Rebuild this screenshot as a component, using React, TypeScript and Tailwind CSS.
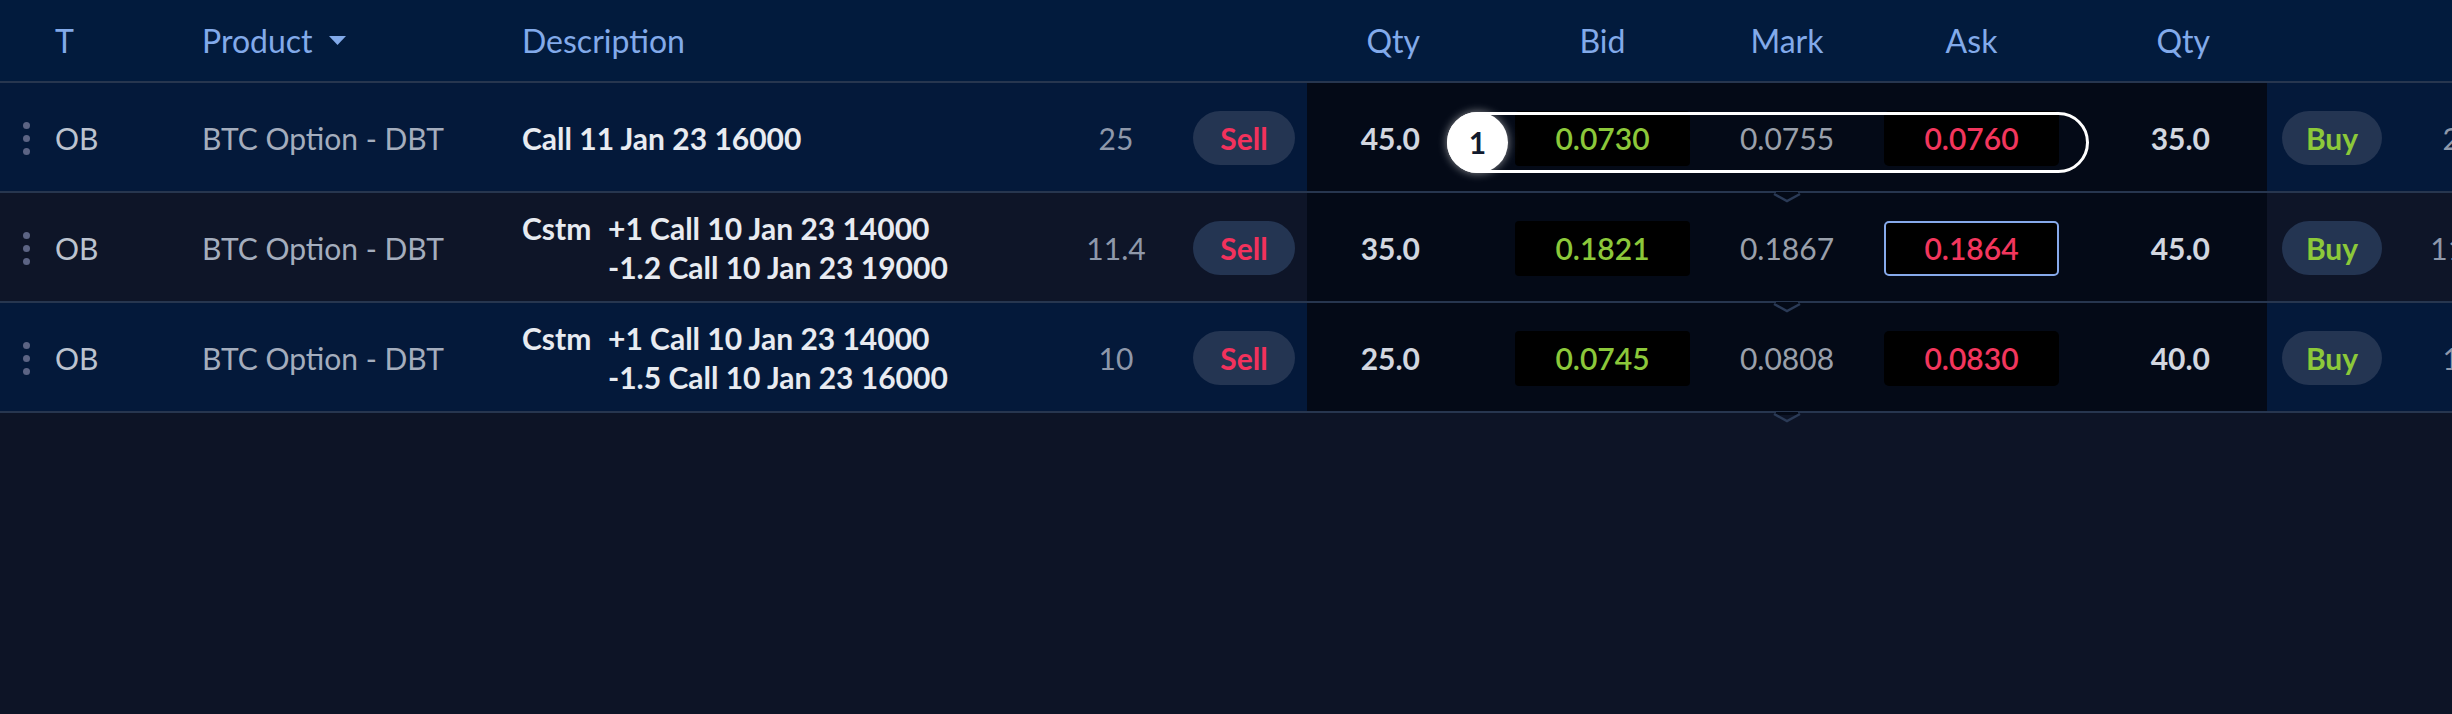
import React from "react";

type Row = {
  lines: string[];
  cstm: boolean;
  size: string;
  qtyL: string;
  bid: string;
  mark: string;
  ask: string;
  qtyR: string;
  sizeR: string;
  even: boolean;
  outline?: boolean;
  askSel?: boolean;
};

const rows: Row[] = [
  { lines: ["Call 11 Jan 23 16000"], cstm: false, size: "25", qtyL: "45.0", bid: "0.0730", mark: "0.0755", ask: "0.0760", qtyR: "35.0", sizeR: "25", even: false, outline: true },
  { lines: ["+1 Call 10 Jan 23 14000", "-1.2 Call 10 Jan 23 19000"], cstm: true, size: "11.4", qtyL: "35.0", bid: "0.1821", mark: "0.1867", ask: "0.1864", qtyR: "45.0", sizeR: "11.4", even: true, askSel: true },
  { lines: ["+1 Call 10 Jan 23 14000", "-1.5 Call 10 Jan 23 16000"], cstm: true, size: "10", qtyL: "25.0", bid: "0.0745", mark: "0.0808", ask: "0.0830", qtyR: "40.0", sizeR: "10", even: false },
];

function Handle() {
  return (
    <div className="flex flex-col items-center gap-[6px]">
      <span className="block w-[7px] h-[7px] rounded-full bg-[#5c6484]" />
      <span className="block w-[7px] h-[7px] rounded-full bg-[#5c6484]" />
      <span className="block w-[7px] h-[7px] rounded-full bg-[#5c6484]" />
    </div>
  );
}

function Notch() {
  return (
    <svg className="absolute left-1/2 -translate-x-1/2 top-[106px] z-10" width="28" height="12" viewBox="0 0 28 12">
      <rect x="3" y="1" width="22" height="3" fill="#040a17" />
      <polyline points="1,3 14,10 27,3" fill="none" stroke="#2a3a56" strokeWidth="2.5" />
    </svg>
  );
}

function DataRow({ r }: { r: Row }) {
  const bg = r.even ? "bg-[#0e1528]" : "bg-[#04193a]";
  return (
    <div className={`flex h-[110px] pt-[2px] border-b-2 border-[#27364f] ${bg}`}>
      <div className="w-[46px] shrink-0 flex items-center justify-center pl-[6px]">
        <Handle />
      </div>
      <div className="w-[156px] shrink-0 flex items-center pl-[9px] text-[#bcc3cf]">OB</div>
      <div className="w-[320px] shrink-0 flex items-center text-[#a4adbd]">BTC Option - DBT</div>
      <div className="w-[548px] shrink-0 flex items-center font-bold text-[#e8ebf1]">
        {r.cstm ? (
          <div className="flex leading-[39px]">
            <div className="w-[86px]">Cstm</div>
            <div className="flex flex-col">
              {r.lines.map((l) => (
                <div key={l}>{l}</div>
              ))}
            </div>
          </div>
        ) : (
          <div>{r.lines[0]}</div>
        )}
      </div>
      <div className="w-[92px] shrink-0 flex items-center justify-center text-[#8e98aa]">{r.size}</div>
      <div className="w-[145px] shrink-0 flex items-center pl-[31px]">
        <div className="w-[102px] h-[54px] rounded-full bg-[#243552] flex items-center justify-center font-bold text-[#f2325c]">Sell</div>
      </div>
      <div className="relative flex shrink-0 w-[960px] bg-[#040a17] -mt-[2px] pt-[2px]">
        <div className="w-[208px] shrink-0 flex items-center justify-end pr-[95px] font-bold text-[#d3d7e0]">{r.qtyL}</div>
        <div className="w-[175px] shrink-0 flex items-center">
          <div className="w-[175px] h-[55px] rounded-[4px] bg-black flex items-center justify-center font-semibold text-[#8cc83a]">{r.bid}</div>
        </div>
        <div className="relative w-[194px] shrink-0 flex items-center justify-center text-[#9aa0ab]">
          {r.mark}
          <Notch />
        </div>
        <div className="w-[175px] shrink-0 flex items-center">
          <div
            className={`w-[175px] h-[55px] rounded-[5px] bg-black flex items-center justify-center font-semibold text-[#f2365d] ${
              r.askSel ? "border-2 border-[#86a9ea]" : ""
            }`}
          >
            {r.ask}
          </div>
        </div>
        <div className="w-[208px] shrink-0 flex items-center justify-end pr-[57px] font-bold text-[#d3d7e0]">{r.qtyR}</div>
        {r.outline && (
          <div className="absolute left-[140px] top-[29px] w-[642px] h-[61px] rounded-full border-[3px] border-white">
            <div className="absolute left-[-3px] top-[-3px] w-[61px] h-[61px] rounded-full bg-white shadow-[0_0_10px_rgba(255,255,255,0.55)] flex items-center justify-center font-bold text-[#111a2e]">
              1
            </div>
          </div>
        )}
      </div>
      <div className="w-[147px] shrink-0 flex items-center pl-[15px]">
        <div className="w-[100px] h-[54px] rounded-full bg-[#243552] flex items-center justify-center font-bold text-[#8cc83a]">Buy</div>
      </div>
      <div className="w-[92px] shrink-0 flex items-center justify-center text-[#8e98aa]">{r.sizeR}</div>
    </div>
  );
}

export default function App() {
  return (
    <div className="w-full h-[714px] overflow-hidden bg-[#0d1426] font-['Lato',sans-serif] text-[30px]">
      <div className="w-[2600px]">
        <div className="flex h-[83px] border-b-2 border-[#27364f] bg-[#021b3d] text-[#82aaea] text-[32px]">
          <div className="w-[46px] shrink-0" />
          <div className="w-[156px] shrink-0 flex items-center pl-[9px]">T</div>
          <div className="w-[320px] shrink-0 flex items-center gap-[16px]">
            Product
            <svg width="17" height="9" viewBox="0 0 17 9">
              <polygon points="0,0 17,0 8.5,9" fill="#82aaea" />
            </svg>
          </div>
          <div className="w-[548px] shrink-0 flex items-center">Description</div>
          <div className="w-[92px] shrink-0" />
          <div className="w-[145px] shrink-0" />
          <div className="w-[208px] shrink-0 flex items-center justify-end pr-[95px]">Qty</div>
          <div className="w-[175px] shrink-0 flex items-center justify-center">Bid</div>
          <div className="w-[194px] shrink-0 flex items-center justify-center">Mark</div>
          <div className="w-[175px] shrink-0 flex items-center justify-center">Ask</div>
          <div className="w-[208px] shrink-0 flex items-center justify-end pr-[57px]">Qty</div>
          <div className="w-[147px] shrink-0" />
          <div className="w-[92px] shrink-0" />
        </div>
        {rows.map((r, i) => (
          <DataRow key={i} r={r} />
        ))}
      </div>
    </div>
  );
}
